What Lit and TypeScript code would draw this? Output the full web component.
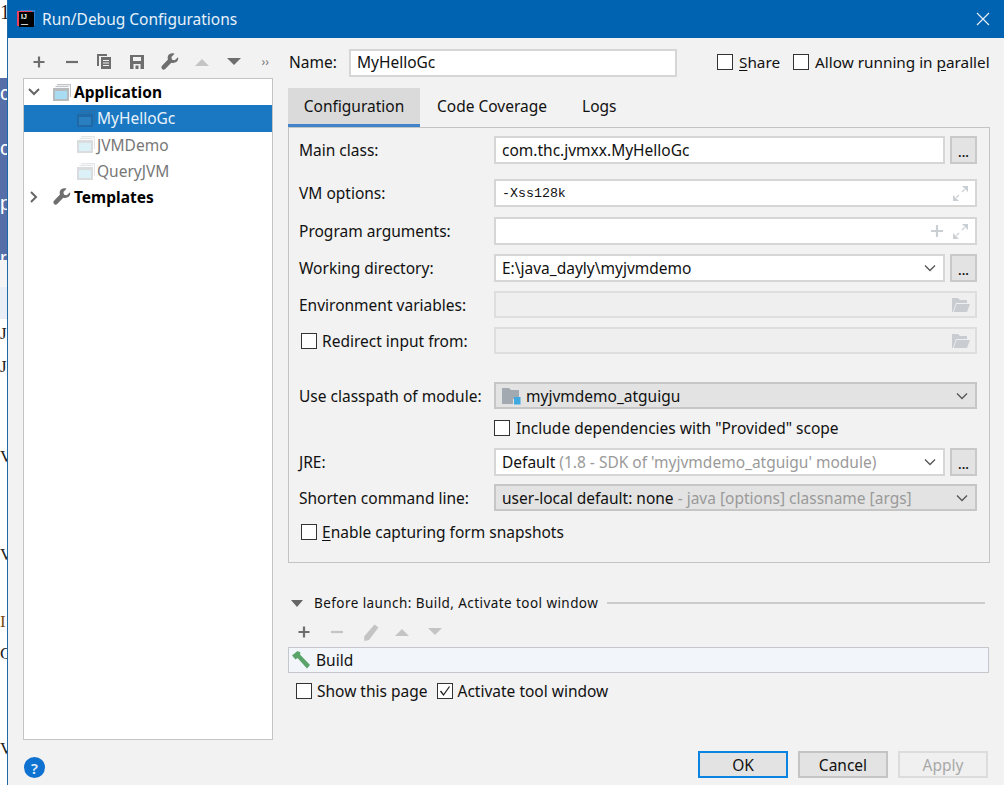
import { LitElement, html, css, svg, nothing } from "lit";
import { customElement } from "lit/decorators.js";

const plus = (c: string) => svg`<svg class="ic" width="16" height="16" viewBox="0 0 16 16"><path d="M8 2.5v11M2.5 8h11" stroke="${c}" stroke-width="2.2" fill="none"/></svg>`;
const minus = (c: string) => svg`<svg class="ic" width="16" height="16" viewBox="0 0 16 16"><path d="M2 8h12" stroke="${c}" stroke-width="2.2" fill="none"/></svg>`;
const up = (c: string) => svg`<svg class="ic" width="16" height="16" viewBox="0 0 16 16"><path d="M1 12L8 5l7 7z" fill="${c}"/></svg>`;
const down = (c: string) => svg`<svg class="ic" width="16" height="16" viewBox="0 0 16 16"><path d="M1 4l7 7 7-7z" fill="${c}"/></svg>`;
const copyIcon = svg`<svg class="ic" width="16" height="17" viewBox="0 0 16 17"><path d="M1 1h10v2H3v10H1z" fill="#6e6e6e"/><path d="M5 4h10v12H5z" fill="#6e6e6e"/><path d="M7 7.5h6M7 10h6M7 12.5h6" stroke="#efefef" stroke-width="1.2"/></svg>`;
const saveIcon = svg`<svg class="ic" width="16" height="16" viewBox="0 0 16 16"><path fill-rule="evenodd" d="M1 1h14v14H1zM4 3v4h8V3zM4.500 10v5h7v-5z" fill="#6e6e6e"/><path d="M6.500 11.500h3v3.500h-3z" fill="#6e6e6e"/></svg>`;
const wrench = (w = 18) => svg`<svg class="ic" width="${w}" height="${w}" viewBox="0 0 18 18"><path d="M17 4.200l-3.300 3.100-2.700-.6-.6-2.700L13.500.800C11-.3 8 .5 7 3c-.5 1.200-.4 2.500 0 3.600L1 12.700c-.8.800-.8 2.200 0 3.200.9 1 2.300 1 3.200.1l6.100-6.200c1.200.4 2.500.4 3.700-.2 2.400-1.100 3.800-3.300 3-5.400z" fill="#6e6e6e"/></svg>`;
const pencil = svg`<svg class="ic pen" width="18" height="18" viewBox="0 0 18 18"><path d="M12.500 1.500l4 3L7 17l-4.500 1-.5-4.500z" fill="#c4c4c4"/></svg>`;
const expand = svg`<svg class="ic" width="17" height="17" viewBox="0 0 17 17"><path d="M10 1h6v6zM1 16V10l6 6z" fill="#c9cfd3"/><path d="M12.500 4.500L10 7M4.500 12.500L7 10" stroke="#c9cfd3" stroke-width="1.200"/></svg>`;
const folder = svg`<svg class="ic" width="20" height="16" viewBox="0 0 20 16"><path d="M1 1h6l2 2h7v3H5L2 15H1z" fill="#c9cdd1"/><path d="M5.500 7H19l-3 8H2.800z" fill="#c9cdd1"/></svg>`;
const chevron = svg`<svg class="ic" width="12" height="8" viewBox="0 0 12 8"><path d="M1 1.500l5 5 5-5" stroke="#555" stroke-width="1.300" fill="none"/></svg>`;
const moduleIcon = svg`<svg class="ic" width="20" height="18" viewBox="0 0 20 18"><path d="M1 1h7l2 2h8v9h-6v5H1z" fill="#a3a9b0"/><path d="M13 10h6.500v7.500H13z" fill="#3fa9e0"/></svg>`;
const hammer = svg`<svg class="ic" width="20" height="20" viewBox="0 0 20 20"><path d="M1 5.500L6.500 1l3 1.500-.5 2L19 15l-3 3.500L6.500 8 4.500 9.500z" fill="#5aa469"/></svg>`;

const appIcon = (kind: "" | "sel" | "dim") => {
  const back = kind === "sel" ? "#2a6fa8" : kind === "dim" ? "#e4e6e8" : "#c3c6c9";
  const front = kind === "sel" ? "#1f69a6" : kind === "dim" ? "#dadcde" : "#b6babd";
  const fill = kind === "sel" ? "#2a7fc0" : kind === "dim" ? "#dcf0f8" : "#a7dcf2";
  return svg`<svg class="ic" width="18" height="17" viewBox="0 0 18 17"><path d="M4 .500h13.500v12.500" fill="none" stroke="${back}" stroke-width="1.300"/><path d="M2.500 2.500h13" stroke="${back}" stroke-width="1.300"/><rect x="0" y="4" width="16" height="13" fill="${front}"/><rect x="2" y="7" width="12" height="8" fill="${fill}"/></svg>`;
};

@customElement("app-root")
export class AppRoot extends LitElement {
  static styles = css`
    :host { display: block; width: 1004px; height: 785px; overflow: hidden; font-family: "Noto Sans", "Liberation Sans", sans-serif; font-size: 15.5px; color: #111; }
    * { box-sizing: border-box; }
    .ic { display: block; flex: none; }
    .screen { display: flex; width: 1004px; height: 785px; }

    .behind { width: 7px; flex: none; display: flex; flex-direction: column; overflow: hidden; background: #fff; font-family: "Liberation Serif", serif; font-size: 20px; line-height: 20px; }
    .b-top { height: 78px; padding-top: 2px; color: #222; }
    .b-blue { height: 182px; background: #566fa8; color: #fff; padding-top: 5px; display: flex; flex-direction: column; gap: 35px; font-family: "Liberation Sans", sans-serif; }
    .b-grey { height: 27px; background: #f4f4f4; }
    .b-pale { height: 32px; background: #e9edf5; }
    .b-marks { flex: 1; position: relative; font-size: 17px; color: #222; }
    .b-marks span { position: absolute; left: 0; }

    .dialog { flex: 1; min-width: 0; display: flex; flex-direction: column; background: #f2f2f2; border-left: 1px solid #1e6aa8; }
    .title { height: 38px; flex: none; background: #0063b1; color: #e8f0f8; display: flex; align-items: center; padding: 0 14px 0 11px; gap: 8px; }
    .logo { width: 15px; height: 15px; background: #000; color: #fff; font-size: 7px; line-height: 7px; font-weight: 700; font-family: "Liberation Sans", sans-serif; padding: 1px 2px; box-shadow: -2px -1px 0 #e8415f, 1px -2px 0 #2f7fd0; flex: none; }
    .title-text { flex: 1; }
    .body { flex: 1; display: flex; min-height: 0; }

    .left { width: 280px; flex: none; padding: 7px 0 0 15px; display: flex; flex-direction: column; }
    .tools { height: 33px; display: flex; align-items: center; padding-left: 8px; }
    .tools .slot { width: 32.500px; display: flex; justify-content: flex-start; }
    .more { font-size: 12px; color: #777; line-height: 1; margin-left: 3px; }
    .tree { width: 250px; height: 662px; background: #fff; border: 1px solid #c4c4c4; }
    .node { height: 26.300px; display: flex; align-items: center; color: #777; padding-left: 53px; gap: 2px; }
    .node.top { padding-left: 0; font-weight: 700; color: #000; }
    .node.sel { background: #1a78c2; color: #e8f2fa; }
    .twist { width: 19px; display: flex; justify-content: center; margin-right: 8px; }
    .top .label { margin-left: 1px; }
    .help { margin: 17px 0 0 1px; width: 21px; height: 21px; border-radius: 50%; background: #0f72d0; color: #dfeefa; font-size: 15px; font-weight: 600; display: flex; align-items: center; justify-content: center; }

    .right { flex: 1; min-width: 0; padding: 11px 15px 0 0; display: flex; flex-direction: column; }
    .name-row { height: 28px; display: flex; align-items: center; }
    .name-label { width: 61px; flex: none; padding: 0 0 2px 1px; }
    .input { background: #fff; border: 2px solid #d6d6d6; display: flex; align-items: center; padding: 0 6px; height: 28px; min-width: 0; white-space: nowrap; }
    .name-input { width: 328px; flex: none; padding-bottom: 2px; }
    .check { display: flex; align-items: center; gap: 6px; white-space: nowrap; }
    .box { width: 16px; height: 16px; background: #fff; border: 1px solid #333; flex: none; display: flex; align-items: center; justify-content: center; }
    .name-row .check { padding-bottom: 2px; font-size: 15.300px; flex: none; }
    .name-row .share { margin-left: 40px; }
    .name-row .par { margin-left: 13px; }
    .tight { gap: 5px; margin-left: 2px; }
    u { text-underline-offset: 2px; }

    .tabs { display: flex; height: 39px; margin-top: 11px; }
    .tab { display: flex; align-items: center; padding: 0 16px 3px; }
    .tab.on { background: #dadada; border-bottom: 3px solid #4083c9; padding-bottom: 0; width: 132px; justify-content: center; }
    .tab.mid { padding-left: 17px; padding-right: 19px; }

    .panel { width: 702px; height: 436px; border: 1px solid #c4c4c4; padding: 8px 12px 0 10px; }
    .row { display: flex; align-items: center; height: 28px; margin-top: 9px; }
    .row.first { margin-top: 0; }
    .row.m15 { margin-top: 15px; }
    .row.m10 { margin-top: 10px; }
    .row.m28 { margin-top: 28px; }
    .row.m11 { margin-top: 11px; }
    .row.m8 { margin-top: 8px; }
    .row.short { height: 27px; }
    .row.cb { height: 19px; margin-top: 9px; }
    .row.cb.last { margin-top: 11px; }
    .field-label { width: 195px; flex: none; white-space: nowrap; }
    .field { flex: 1; min-width: 0; display: flex; gap: 5px; height: 100%; }
    .field .input { flex: 1; height: 100%; justify-content: space-between; }
    .field .input.ro { background: #e3e3e3; border-color: #c6c6c6; }
    .field .input.off { background: #efefef; border-color: #dedede; justify-content: flex-end; padding-right: 4px; }
    .browse { width: 27px; flex: none; background: #e3e3e3; border: 2px solid #c9c9c9; display: flex; align-items: flex-end; justify-content: center; font-size: 13px; line-height: 19px; font-weight: 600; }
    .mono { font-family: "Liberation Mono", monospace; font-size: 13.300px; }
    .gr { color: #9a9a9a; }
    .end { display: flex; align-items: center; gap: 8px; }
    .mod { display: flex; align-items: center; gap: 5px; margin-left: -1px; }
    .chev { margin-right: 1px; }

    .sep { display: flex; align-items: center; margin-top: 29px; height: 22px; padding-left: 3px; gap: 10px; font-size: 13.500px; letter-spacing: .43px; white-space: nowrap; }
    .sep .rule { width: 378px; height: 2px; background: #cccccc; margin-left: -1px; }
    .tri { flex: none; width: 0; height: 0; border-left: 6px solid transparent; border-right: 6px solid transparent; border-top: 7px solid #666; margin-right: 1px; }
    .tools2 { display: flex; align-items: center; height: 26px; margin: 5px 0 2px; padding-left: 8px; gap: 17px; }
    .tools2 .pen { margin-right: -3px; }
    .list { width: 701px; height: 26px; background: #f2f5fa; border: 1px solid #c4c8cc; display: flex; align-items: center; padding-left: 2px; gap: 5px; }
    .opts { display: flex; align-items: center; height: 20px; margin-top: 8px; padding-left: 8px; gap: 9px; }
    .opts .check { gap: 5px; }
    .buttons { margin-top: 50px; display: flex; gap: 10px; padding-left: 410px; }
    .btn { width: 90px; height: 27px; background: #e3e3e3; border: 2px solid #c4c4c4; display: flex; align-items: center; justify-content: center; }
    .btn.def { border-color: #0a84e0; }
    .btn.off { background: #f0f0f0; border-color: #dcdcdc; color: #a8a8a8; }
  `;

  private chk(label: unknown, checked = false, cls = "") {
    return html`<div class="check ${cls}"><span class="box">${checked ? svg`<svg width="12" height="12" viewBox="0 0 12 12"><path d="M1.500 6l3 4L10.500 1.500" fill="none" stroke="#222" stroke-width="1.300"/></svg>` : nothing}</span><span>${label}</span></div>`;
  }

  render() {
    return html`<div class="screen">
      <div class="behind">
        <div class="b-top">1</div>
        <div class="b-blue"><span>c</span><span>c</span><span>p</span><span>r</span></div>
        <div class="b-grey"></div>
        <div class="b-pale"></div>
        <div class="b-marks">
          <span style="top:5px">J</span><span style="top:38px">J</span><span style="top:128px">V</span><span style="top:226px">V</span><span style="top:293px;color:#7a4a10">I</span><span style="top:325px">C</span><span style="top:420px">V</span>
        </div>
      </div>
      <div class="dialog">
        <div class="title"><div class="logo">IJ<br />—</div><div class="title-text">Run/Debug Configurations</div>
          <svg width="14" height="14" viewBox="0 0 14 14"><path d="M1 1l12 12M13 1L1 13" stroke="#e4edf6" stroke-width="1.200"/></svg></div>
        <div class="body">
          <div class="left">
            <div class="tools">
              <span class="slot">${plus("#6e6e6e")}</span><span class="slot">${minus("#6e6e6e")}</span><span class="slot">${copyIcon}</span><span class="slot">${saveIcon}</span><span class="slot">${wrench()}</span><span class="slot">${up("#c4c4c4")}</span><span class="slot">${down("#6e6e6e")}</span><span class="more">››</span>
            </div>
            <div class="tree">
              <div class="node top"><span class="twist"><svg class="ic" width="12" height="8" viewBox="0 0 12 8"><path d="M1 1l5 5 5-5" stroke="#666" stroke-width="2" fill="none"/></svg></span>${appIcon("")}<span class="label">Application</span></div>
              <div class="node sel">${appIcon("sel")}<span>MyHelloGc</span></div>
              <div class="node">${appIcon("dim")}<span>JVMDemo</span></div>
              <div class="node">${appIcon("dim")}<span>QueryJVM</span></div>
              <div class="node top"><span class="twist"><svg class="ic" width="8" height="12" viewBox="0 0 8 12"><path d="M1 1l5 5-5 5" stroke="#666" stroke-width="2" fill="none"/></svg></span>${wrench(18)}<span class="label">Templates</span></div>
            </div>
            <div class="help">?</div>
          </div>
          <div class="right">
            <div class="name-row"><span class="name-label">Name:</span><div class="input name-input">MyHelloGc</div>
              ${this.chk(html`<u>S</u>hare`, false, "share")}${this.chk(html`Allow running in <u>p</u>arallel`, false, "par")}</div>
            <div class="tabs"><div class="tab on">Configuration</div><div class="tab mid">Code Coverage</div><div class="tab">Logs</div></div>
            <div class="panel">
              <div class="row first"><span class="field-label">Main class:</span><div class="field"><div class="input">com.thc.jvmxx.MyHelloGc</div><div class="browse">...</div></div></div>
              <div class="row m15"><span class="field-label">VM options:</span><div class="field"><div class="input"><span class="mono">-Xss128k</span>${expand}</div></div></div>
              <div class="row m10"><span class="field-label">Program arguments:</span><div class="field"><div class="input"><span></span><span class="end"><svg class="ic" width="14" height="14" viewBox="0 0 14 14"><path d="M7 1v12M1 7h12" stroke="#c9cfd3" stroke-width="2.200"/></svg>${expand}</span></div></div></div>
              <div class="row"><span class="field-label">Working directory:</span><div class="field"><div class="input"><span>E:\\java_dayly\\myjvmdemo</span><span class="chev">${chevron}</span></div><div class="browse">...</div></div></div>
              <div class="row short"><span class="field-label">Environment variables:</span><div class="field"><div class="input off">${folder}</div></div></div>
              <div class="row short"><span class="field-label">${this.chk("Redirect input from:", false, "tight")}</span><div class="field"><div class="input off">${folder}</div></div></div>
              <div class="row short m28"><span class="field-label">Use classpath of module:</span><div class="field"><div class="input ro"><span class="mod">${moduleIcon}<span>myjvmdemo_atguigu</span></span><span class="chev">${chevron}</span></div></div></div>
              <div class="row cb"><span class="field-label"></span>${this.chk('Include dependencies with "Provided" scope')}</div>
              <div class="row m11"><span class="field-label">JRE:</span><div class="field"><div class="input"><span>Default <span class="gr">(1.8 - SDK of 'myjvmdemo_atguigu' module)</span></span><span class="chev">${chevron}</span></div><div class="browse">...</div></div></div>
              <div class="row short m8"><span class="field-label">Shorten command line:</span><div class="field"><div class="input ro"><span>user-local default: none <span class="gr">- java [options] classname [args]</span></span><span class="chev">${chevron}</span></div></div></div>
              <div class="row cb last">${this.chk(html`<u>E</u>nable capturing form snapshots`, false, "tight")}</div>
            </div>
            <div class="sep"><span class="tri"></span><span>Before launch: Build, Activate tool window</span><span class="rule"></span></div>
            <div class="tools2">${plus("#6e6e6e")}${minus("#c4c4c4")}${pencil}${up("#c4c4c4")}${down("#c4c4c4")}</div>
            <div class="list">${hammer}<span>Build</span></div>
            <div class="opts">${this.chk("Show this page")}${this.chk("Activate tool window", true)}</div>
            <div class="buttons"><div class="btn def">OK</div><div class="btn">Cancel</div><div class="btn off">Apply</div></div>
          </div>
        </div>
      </div>
    </div>`;
  }
}
